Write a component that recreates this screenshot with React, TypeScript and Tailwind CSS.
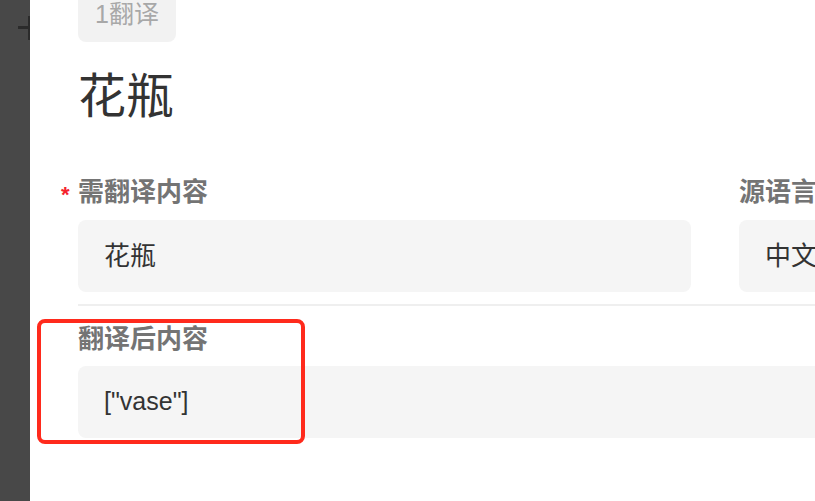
import React from "react";

const font = { fontFamily: '"Liberation Sans", "Noto Sans CJK SC", sans-serif' };

export default function App() {
  return (
    <div className="relative flex h-[501px] w-[815px] overflow-hidden bg-white" style={font}>
      <div className="relative h-full w-[30px] shrink-0 bg-[#484848]">
        <svg className="absolute left-0 top-0" width="30" height="50" viewBox="0 0 30 50">
          <rect x="18" y="26" width="12" height="3" fill="#2b2b2b" />
          <rect x="28" y="16" width="2" height="24" fill="#2b2b2b" />
        </svg>
      </div>
      <div className="flex-1 pl-[48px]">
        <div className="-mt-[14px] inline-flex h-[56px] items-center rounded-[8px] bg-[#f2f2f2] px-[17px] text-[25px] leading-[56px] text-[#a8a8a8]">
          1翻译
        </div>
        <div className="mt-[27px] text-[48px] leading-[56px] text-[#333]">花瓶</div>
        <div className="mt-[51px] grid grid-cols-[613px_1fr] gap-x-[48px]">
          <div>
            <div className="relative text-[26px] font-bold leading-[32px] text-[#747474]">
              <span className="absolute -left-[17px] top-[3px] text-[22px] font-bold text-[#f5222d]">*</span>
              需翻译内容
            </div>
            <div className="mt-[12px] flex h-[72px] items-center rounded-[8px] bg-[#f5f5f5] px-[26px] text-[26px] text-[#333]">
              花瓶
            </div>
          </div>
          <div>
            <div className="whitespace-nowrap text-[26px] font-bold leading-[32px] text-[#747474]">源语言</div>
            <div className="mt-[12px] flex h-[72px] w-[300px] items-center rounded-[8px] bg-[#f5f5f5] px-[26px] text-[26px] text-[#333]">
              中文
            </div>
          </div>
        </div>
        <div className="mt-[12px] h-[2px] bg-[#efefef]" />
        <div className="mt-[17px] text-[26px] font-bold leading-[32px] text-[#747474]">翻译后内容</div>
        <div className="mt-[11px] flex h-[72px] w-[800px] items-center rounded-[8px] bg-[#f5f5f5] px-[26px] text-[25px] text-[#333]">
          ["vase"]
        </div>
      </div>
      <div className="absolute left-[37px] top-[319px] h-[125px] w-[268px] rounded-[8px] border-[4px] border-[#ff2a1c]" />
    </div>
  );
}
